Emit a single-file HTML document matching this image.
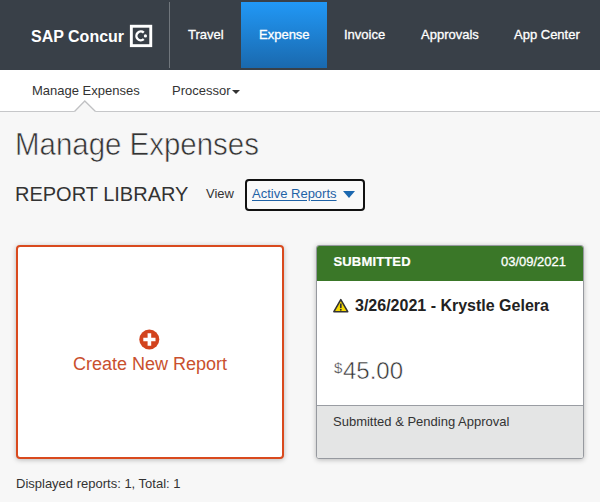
<!DOCTYPE html>
<html><head><meta charset="utf-8">
<style>
*{box-sizing:border-box;margin:0;padding:0}
html,body{width:600px;height:502px;overflow:hidden;background:#f7f7f7;font-family:"Liberation Sans",sans-serif;color:#222}
#hdr{position:absolute;left:0;top:0;width:600px;height:70px;background:#394048}
#logo{position:absolute;left:31px;top:27px;font-size:16px;font-weight:bold;color:#fff;line-height:20px;white-space:nowrap}
#lbox{position:absolute;left:129px;top:24px;width:24px;height:24px}
#div{position:absolute;left:169px;top:2px;width:1px;height:66px;background:#70767c}
.nav{position:absolute;top:0;height:69px;line-height:69px;color:#fff;font-size:13px;white-space:nowrap;-webkit-text-stroke:.3px #fff}
#exp{position:absolute;left:241px;top:2px;width:86px;height:66px;background:linear-gradient(#2198f6,#1a69ae)}
#sub{position:absolute;left:0;top:70px;width:600px;height:42px;background:#fff;border-bottom:1px solid #c6c7c9}
.s{position:absolute;top:83px;font-size:13px;line-height:16px;color:#333;white-space:nowrap}
#h1{position:absolute;left:14.5px;top:124px;font-size:32px;line-height:40px;color:#333;white-space:nowrap;transform-origin:0 0;transform:scaleX(.92);-webkit-text-stroke:.6px #f7f7f7}
#h2{position:absolute;left:15px;top:181px;font-size:20px;line-height:26px;color:#333;white-space:nowrap}
#view{position:absolute;left:206px;top:186px;font-size:13px;line-height:16px;color:#333}
#dd{position:absolute;left:245px;top:179px;width:120px;height:32px;border:2px solid #111;border-radius:4px;background:#f9f9f9}
#ddt{position:absolute;left:252px;top:186px;font-size:13px;line-height:16px;color:#1f62a6;text-decoration:underline;text-underline-offset:2px;white-space:nowrap}
#dda{position:absolute;left:343px;top:191px;width:0;height:0;border-left:6px solid transparent;border-right:6px solid transparent;border-top:7px solid #1c68b0}
#c1{position:absolute;left:16px;top:245px;width:268px;height:214px;border:2px solid #d94a1e;border-radius:4px;background:#fff;box-shadow:0 1px 5px rgba(0,0,0,.25)}
#c1t{position:absolute;left:16px;top:353px;width:268px;text-align:center;font-size:18px;line-height:22px;color:#c9502e}
#c2{position:absolute;left:316px;top:245px;width:268px;height:214px;border:1px solid #96999f;border-radius:3px;background:#fff;box-shadow:0 1px 5px rgba(0,0,0,.25);overflow:hidden}
#c2h{position:absolute;left:0;top:0;width:100%;height:35px;background:#3a7728}
#c2f{position:absolute;left:0;top:159px;width:100%;height:55px;background:#e4e5e5;border-top:1px solid #9a9da3}
.t{position:absolute;white-space:nowrap}
</style></head><body>
<div id="hdr"></div>
<div id="logo">SAP Concur</div>
<svg id="lbox" viewBox="0 0 24 24"><rect x="2.35" y="2.25" width="19.4" height="19.4" fill="none" stroke="#fff" stroke-width="2.9"/><path d="M14.78 8.67A4.4 4.4 0 1 0 14.78 15.21" fill="none" stroke="#fff" stroke-width="2.45"/><circle cx="16.4" cy="11.94" r="1.6" fill="#fff"/></svg>
<div id="div"></div>
<div id="exp"></div>
<div class="nav" style="left:188px">Travel</div>
<div class="nav" style="left:259px">Expense</div>
<div class="nav" style="left:344px">Invoice</div>
<div class="nav" style="left:421px">Approvals</div>
<div class="nav" style="left:514px">App Center</div>
<div id="sub"></div>
<svg style="position:absolute;left:70px;top:98px" width="30" height="16" viewBox="0 0 30 16"><path d="M4.5 13.5 L14.8 3 L25.5 13.5 L25.5 15 L4.5 15Z" fill="#f7f7f7"/><path d="M4.5 13.5 L14.8 3 L25.5 13.5" fill="none" stroke="#c0c1c3" stroke-width="1.3"/></svg>
<div class="s" style="left:32px">Manage Expenses</div>
<div class="s" style="left:172px">Processor</div>
<div style="position:absolute;left:232px;top:90px;width:0;height:0;border-left:4px solid transparent;border-right:4px solid transparent;border-top:4px solid #333"></div>
<div id="h1">Manage Expenses</div>
<div id="h2">REPORT LIBRARY</div>
<div id="view">View</div>
<div id="dd"></div>
<div id="ddt">Active Reports</div>
<div id="dda"></div>
<div id="c1"></div>
<svg style="position:absolute;left:139px;top:329px" width="21" height="21" viewBox="0 0 21 21"><circle cx="10.3" cy="10.5" r="10" fill="#d2431d"/><path d="M4.3 10.5H16.5M10.4 4.3V16.7" stroke="#fff" stroke-width="3.6"/></svg>
<div id="c1t">Create New Report</div>
<div id="c2"><div id="c2h"></div><div id="c2f"></div>
<div class="t" style="left:16.5px;top:8px;font-size:13px;line-height:16px;font-weight:bold;color:#fff;-webkit-text-stroke:.2px #fff;letter-spacing:.15px">SUBMITTED</div>
<div class="t" style="right:17px;top:8px;font-size:13px;line-height:16px;color:#fff;-webkit-text-stroke:.3px #fff">03/09/2021</div>
<svg style="position:absolute;left:16px;top:52px" width="17" height="16" viewBox="0 0 17 16"><path d="M7.8 1.6 L14.7 13.7 H0.9 Z" fill="#f6d900" stroke="#333" stroke-width="1.6" stroke-linejoin="round"/><path d="M7.8 5.4V9.9" stroke="#333" stroke-width="1.7"/><circle cx="7.8" cy="11.8" r=".95" fill="#333"/></svg>
<div class="t" style="left:38px;top:50px;font-size:16px;line-height:20px;font-weight:bold;color:#222">3/26/2021 - Krystle Gelera</div>
<div class="t" style="left:17px;top:114px;font-size:15px;line-height:16px;color:#333;-webkit-text-stroke:.3px #fff">$</div>
<div class="t" style="left:26px;top:111px;font-size:24px;line-height:28px;color:#333;-webkit-text-stroke:.5px #fff">45.00</div>
<div class="t" style="left:16px;top:168px;font-size:13px;line-height:16px;color:#333">Submitted &amp; Pending Approval</div>
</div>
<div class="t" style="left:16px;top:476px;font-size:13px;line-height:16px;color:#333">Displayed reports: 1, Total: 1</div>
</body></html>
